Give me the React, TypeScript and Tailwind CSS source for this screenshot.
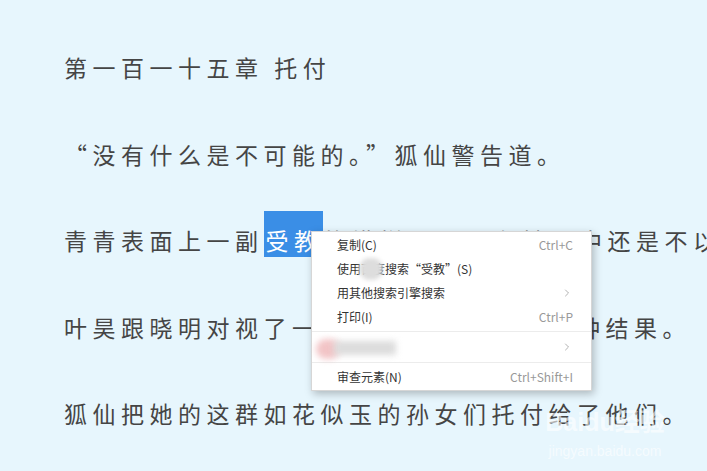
import { ChevronRight } from "lucide-react";

const cjk = { fontFamily: '"Noto Sans CJK SC", "Noto Sans", sans-serif' };

const MenuItem = ({
  label,
  shortcut,
  sub,
}: {
  label: React.ReactNode;
  shortcut?: string;
  sub?: boolean;
}) => (
  <div className="flex items-center justify-between h-[24px] pl-[25px] pr-[18px] text-[12px] text-[#333]">
    <span>{label}</span>
    {shortcut && <span className="text-[#999]">{shortcut}</span>}
    {sub && <ChevronRight className="w-[12px] h-[14px] text-[#888]" strokeWidth={1.3} />}
  </div>
);

export default function App() {
  return (
    <div
      className="relative w-[707px] h-[471px] overflow-hidden bg-[#e7f6fd] text-[#454545]"
      style={cjk}
    >
      <div className="pt-[24px] pl-[64px] text-[23px] tracking-[5.5px] whitespace-nowrap">
        <p className="leading-[86.5px]">第一百一十五章 托付</p>
        <p className="leading-[86.5px]">“没有什么是不可能的。”狐仙警告道。</p>
        <p className="leading-[86.5px]">
          青青表面上一副
          <span className="bg-[#3a8ee6] text-white pt-[12px] pl-[2px]">受教</span>
          的模样，可是在她心中还是不以为然。
        </p>
        <p className="leading-[86.5px]">叶昊跟晓明对视了一眼，都想到了其中一种结果。</p>
        <p className="leading-[86.5px]">狐仙把她的这群如花似玉的孙女们托付给了他们。</p>
      </div>

      {/* context menu */}
      <div className="absolute left-[311px] top-[231px] w-[281px] bg-white border border-[#d6d6d6] shadow-[2px_3px_8px_rgba(0,0,0,0.25)] py-[1px]">
        <MenuItem label="复制(C)" shortcut="Ctrl+C" />
        <MenuItem
          label={
            <span className="relative">
              使用百度搜索“受教”(S)
              <span className="absolute left-[22px] top-[-2px] w-[24px] h-[22px] rounded-full bg-[#ddd] blur-[2px]" />
            </span>
          }
        />
        <MenuItem label="用其他搜索引擎搜索" sub />
        <MenuItem label="打印(I)" shortcut="Ctrl+P" />
        <div className="my-[2px] h-px bg-[#ececec]" />
        <div className="relative h-[26px] flex items-center justify-end pr-[18px]">
          <span className="absolute left-[4px] top-[5px] w-[24px] h-[20px] rounded-full bg-[#f2c4c6] blur-[3px]" />
          <span className="absolute left-[22px] top-[7px] w-[62px] h-[14px] bg-[#dcdcdc] blur-[3px]" />
          <ChevronRight className="w-[12px] h-[14px] text-[#888]" strokeWidth={1.3} />
        </div>
        <div className="my-[2px] h-px bg-[#ececec]" />
        <MenuItem label="审查元素(N)" shortcut="Ctrl+Shift+I" />
      </div>

      {/* watermark */}
      <div
        className="absolute left-[542px] top-[408px] w-[126px] text-white/60 flex flex-col items-center"
        style={{ fontFamily: '"Liberation Sans", "Noto Sans CJK SC", sans-serif' }}
      >
        <div className="text-[25px] font-bold leading-[28px]">Baidu经验</div>
        <div className="text-[14px] leading-[18px] mt-[6px]">jingyan.baidu.com</div>
      </div>
    </div>
  );
}
